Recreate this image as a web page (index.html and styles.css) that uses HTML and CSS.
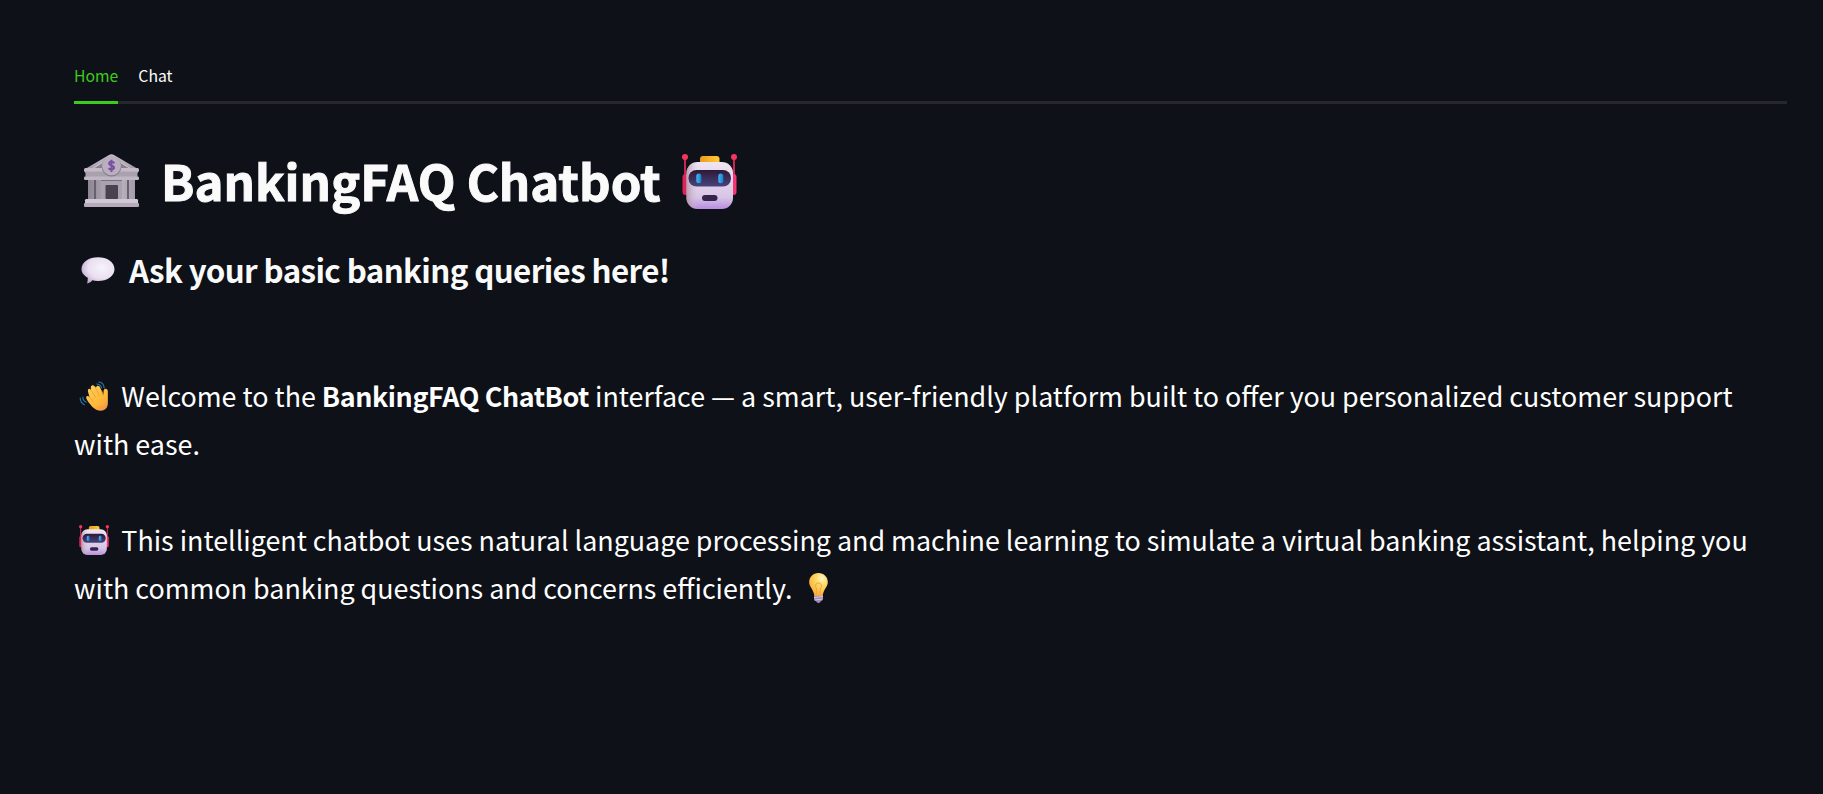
FILE: index.html
```html
<!DOCTYPE html>
<html lang="en">
<head>
<meta charset="utf-8">
<title>BankingFAQ Chatbot</title>
<link rel="stylesheet" href="styles.css">
</head>
<body>
<svg class="defs" aria-hidden="true">
  <defs>
    <linearGradient id="face" x1="0" y1="0" x2="0" y2="1"><stop offset="0" stop-color="#eee5f2"/><stop offset=".75" stop-color="#d8c5e6"/><stop offset="1" stop-color="#b88ee0"/></linearGradient>
    <linearGradient id="side" x1="0" x2="1"><stop offset="0" stop-color="#a98c9b" stop-opacity=".75"/><stop offset=".25" stop-color="#d9c5d5" stop-opacity="0"/></linearGradient>
    <linearGradient id="visor" x1="0" y1="0" x2="0" y2="1"><stop offset="0" stop-color="#2f1836"/><stop offset="1" stop-color="#46447c"/></linearGradient>
    <linearGradient id="eye" x1="0" x2="1"><stop offset="0" stop-color="#3bb9f6"/><stop offset="1" stop-color="#1b7fc9"/></linearGradient>
    <linearGradient id="cap" x1="0" x2="1"><stop offset="0" stop-color="#eb9a1f"/><stop offset="1" stop-color="#ffcd35"/></linearGradient>
    <linearGradient id="stone" x1="0" y1="0" x2="0" y2="1"><stop offset="0" stop-color="#c9bfcd"/><stop offset=".55" stop-color="#b1a8b6"/><stop offset="1" stop-color="#928a99"/></linearGradient>
    <linearGradient id="column" x1="0" x2="1"><stop offset="0" stop-color="#8d8593"/><stop offset=".6" stop-color="#c2bac7"/><stop offset="1" stop-color="#a49ba8"/></linearGradient>
    <radialGradient id="bubble" cx=".62" cy=".4" r=".7"><stop offset="0" stop-color="#f7f3fa"/><stop offset=".6" stop-color="#e9dff0"/><stop offset="1" stop-color="#b9a4cc"/></radialGradient>
    <linearGradient id="hand" x1="0" y1="0" x2=".6" y2="1"><stop offset="0" stop-color="#ffd05a"/><stop offset=".8" stop-color="#ffb637"/><stop offset="1" stop-color="#f99a48"/></linearGradient>
    <radialGradient id="glass" cx=".68" cy=".25" r=".8"><stop offset="0" stop-color="#fff6cf"/><stop offset=".35" stop-color="#ffdb68"/><stop offset="1" stop-color="#f9ac35"/></radialGradient>
    <symbol id="robot" viewBox="0 0 55 55">
      <path d="M3 3V22M52 3V22" stroke="#cf2453" stroke-width="2"/>
      <rect x=".5" y="20" width="6" height="21" rx="3" fill="#df2358"/><rect x="48.5" y="20" width="6" height="21" rx="3" fill="#f43672"/>
      <circle cx="3" cy="3" r="3" fill="#f43661"/><circle cx="52" cy="3" r="3" fill="#f43661"/>
      <rect x="18" y="2" width="19.500" height="9" rx="3" fill="url(#cap)"/>
      <rect x="4.500" y="8" width="46.500" height="47" rx="11" fill="url(#face)"/><rect x="4.500" y="8" width="46.500" height="47" rx="11" fill="url(#side)"/>
      <rect x="6.500" y="16" width="42.500" height="16.500" rx="8" fill="url(#visor)"/>
      <rect x="14.300" y="19.500" width="5" height="9.700" rx="2.500" fill="url(#eye)"/><rect x="36.300" y="19.500" width="5" height="9.700" rx="2.500" fill="url(#eye)"/>
      <rect x="20" y="41" width="15.500" height="6" rx="3" fill="#35234c"/>
    </symbol>
    <symbol id="bank" viewBox="0 0 55 53">
      <path d="M4 23H51V46H4Z" fill="#77707e"/>
      <path d="M1 15L25 1Q27.500-.5 30 1L54 15V19H1Z" fill="url(#stone)"/>
      <path d="M8 15L20 8V15ZM47 15L35 8V15Z" fill="#8a818f"/>
      <path d="M7 15.500L21 7M48 15.500L34 7" stroke="#d2c9d6" stroke-width="1"/>
      <rect x="0" y="14" width="55" height="4" rx="1.500" fill="#c4bac8"/>
      <rect x="1.500" y="17.500" width="52" height="6" fill="#aaa1ae"/>
      <rect x="0" y="22.500" width="55" height="3.500" rx="1.300" fill="#c0b7c4"/>
      <path d="M17 27H38V45H17Z" fill="#aaa2ae"/>
      <path d="M4 26H10V45H4ZM12 26H17V45H12ZM38 26H43V45H38ZM45 26H51V45H45Z" fill="url(#column)"/>
      <path d="M10 26H12V45H10ZM43 26H45V45H43Z" fill="#68616d"/>
      <rect x="21.500" y="31" width="12.500" height="14" rx=".8" fill="#4c4153"/>
      <rect x="1" y="45" width="53" height="4.500" rx="1.200" fill="#d1c8d6"/><rect x="0" y="49" width="55" height="4" rx="1" fill="#b5abba"/>
      <circle cx="27.500" cy="12.500" r="10" fill="#857b8b"/><circle cx="27.500" cy="11.700" r="9.500" fill="#b9afbf"/>
      <path d="M30.500 9.200Q27.500 6.300 25.200 8.700C23.800 12 31 11 30 14.300Q27.500 17 24.500 14.300M27.500 5.800V18" fill="none" stroke="#7950a4" stroke-width="2"/>
    </symbol>
    <symbol id="speech" viewBox="0 0 34 27">
      <path d="M17 .3C26 .3 33.500 5 33.500 12.300C33.500 19.500 26 24 17 24Q13.500 24 11.300 23.300Q10 25.800 6.500 26.500Q5.700 26.200 6.500 24.800L6.800 20.800C3 18.700.5 16 .5 12.300C.5 5 8 .3 17 .3Z" fill="url(#bubble)"/>
    </symbol>
    <symbol id="wave" viewBox="0 0 30 31">
      <g fill="none" stroke="#287cb9" stroke-width="1.100" stroke-linecap="round"><path d="M18 3Q22 3.500 22.700 7M20 1Q25 1.500 25.500 7M3.500 16.500Q3.500 20.500 7 22M.7 17.500Q1 22.500 5 24.500"/></g>
      <path d="M8 20L7.300 18.500C5.800 15.500 8.800 14.500 10.500 17L9 12C7.800 8 10.500 7 12 9.500L11.700 7C11.500 4 14.500 3.500 16 6L17 7C17.800 4 20.500 4.500 21.500 7L24.500 14.500L25 10C25.200 7 29.300 7.300 29.300 10.500V23C29.300 28 26 30.500 22 30.700C17 30.900 13 27.500 8 20Z" fill="url(#hand)"/>
      <path d="M10.500 17L14 21M12 9.500L16.500 17M16 6L20.500 15M23 10L24.500 15" fill="none" stroke="#ed9a37" stroke-width=".8" stroke-linecap="round"/>
    </symbol>
    <symbol id="bulb" viewBox="0 0 19 30">
      <path d="M5 22H14V26Q13.500 28 11.700 28.300Q11.500 30 9.500 30Q7.500 30 7.300 28.300Q5.500 28 5 26Z" fill="#a38bb4"/><path d="M5 24.500L14 23.500M5.500 27L13.500 26" stroke="#d8c8e2" stroke-width="1"/>
      <path d="M9.500 0C15 0 18.800 4 18.800 9.200C18.800 13.500 15.500 15.500 14.300 20Q14 22.800 12.500 22.800H6.500Q5 22.800 4.700 20C3.500 15.500.2 13.500.2 9.200C.2 4 4 0 9.500 0Z" fill="url(#glass)"/>
      <path d="M7.700 22V16Q5.500 13.500 7 11Q9.500 8.500 12 11Q13.500 13.500 11.300 16V22" fill="none" stroke="#f6a536" stroke-width="1"/>
    </symbol>
  </defs>
</svg>
<main class="page">
  <nav class="tabs"><a class="tab active">Home</a><a class="tab">Chat</a></nav>
  <h1 class="title"><svg class="icon-bank"><use href="#bank"/></svg><span>BankingFAQ Chatbot</span><svg class="icon-robot"><use href="#robot"/></svg></h1>
  <h3 class="subtitle"><svg class="icon-speech"><use href="#speech"/></svg><span>Ask your basic banking queries here!</span></h3>
  <section class="intro">
    <p><svg class="emoji"><use href="#wave"/></svg>Welcome to the <b>BankingFAQ ChatBot</b> interface — a smart, user-friendly platform built to offer you personalized customer support<br>with ease.</p>
    <p><svg class="emoji"><use href="#robot"/></svg>This intelligent chatbot uses natural language processing and machine learning to simulate a virtual banking assistant, helping you<br>with common banking questions and concerns efficiently.<svg class="emoji-bulb"><use href="#bulb"/></svg></p>
  </section>
</main>
</body>
</html>
```
FILE: styles.css
```css
* { box-sizing: border-box; }
body {
  margin: 0;
  height: 794px;
  overflow: hidden;
  background: #0e1117;
  color: #fafafa;
  font-family: "Noto Sans CJK SC", sans-serif;
}
.defs { display: block; width: 0; height: 0; }
.page { padding: 56px 36px 0 74px; }
.tabs {
  display: flex;
  gap: 20px;
  height: 48px;
  box-shadow: inset 0 -3px #27282d;
  font-size: 15.75px;
  line-height: 40px;
}
.tab { height: 48px; color: #fff; }
.active { color: #3dcb1d; border-bottom: 3px solid #3dcb1d; }
.title {
  display: flex;
  align-items: flex-start;
  margin: 44px 0 0;
  height: 70px;
  padding-left: 10px;
  font-size: 49.1px;
  line-height: 63px;
  font-weight: 700;
  white-space: nowrap;
  -webkit-text-stroke: 1px #fafafa;
}
.icon-bank { width: 55px; height: 53px; margin: 6px 22px 0 0; flex: none; }
.icon-robot { width: 55px; height: 55px; margin: 6px 0 0 21px; flex: none; }
.subtitle {
  display: flex;
  margin: 31px 0 0;
  height: 46px;
  padding-left: 7px;
  font-size: 31.3px;
  line-height: 42px;
  font-weight: 600;
  letter-spacing: -.62px;
  white-space: nowrap;
}
.icon-speech { width: 34px; height: 27px; margin: 8px 14px 0 0; flex: none; }
.intro { margin-top: 77px; color: #fff; font-size: 26.86px; line-height: 48px; }
.intro p { margin: 0 0 48px; white-space: nowrap; }
.intro b { font-weight: 600; letter-spacing: -.4px; }
.emoji { width: 30px; height: 30px; margin: 0 12.3px 0 5px; vertical-align: -4px; }
.emoji-bulb { width: 19px; height: 30px; margin-left: 17px; vertical-align: -4px; }
```
